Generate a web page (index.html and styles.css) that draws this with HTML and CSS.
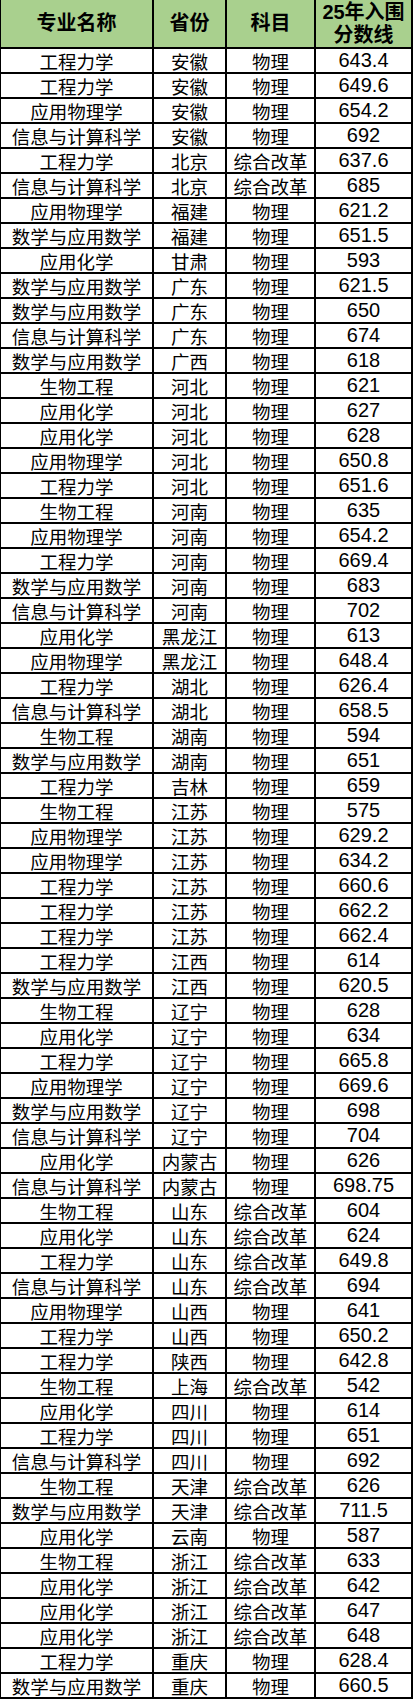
FILE: index.html
```html
<!DOCTYPE html>
<html lang="zh-CN">
<head>
<meta charset="utf-8">
<title>25年入围分数线</title>
<link rel="stylesheet" href="styles.css">
</head>
<body>
<div class="sheet" id="sheet">
  <div class="hd c1">专业名称</div>
  <div class="hd">省份</div>
  <div class="hd">科目</div>
  <div class="hd">25年入围<br>分数线</div>
</div>
<script src="app.js"></script>
</body>
</html>
```

FILE: styles.css
```css
html, body {
  margin: 0;
  padding: 0;
  background: #fff;
}
body {
  width: 413px;
  font-family: "Liberation Sans", "Noto Sans CJK SC", sans-serif;
  color: #000;
}
.sheet {
  display: grid;
  grid-template-columns: 154px 73px 89px 97px;
  grid-template-rows: 49px;
  grid-auto-rows: 25px;
}
.hd {
  background: #A9D08E;
  font-weight: bold;
  font-size: 20px;
  line-height: 23px;
  text-align: center;
  box-sizing: border-box;
  border-right: 2px solid #000;
  border-bottom: 2px solid #000;
  display: flex;
  align-items: center;
  justify-content: center;
}
.cell {
  box-sizing: border-box;
  border-right: 2px solid #000;
  border-bottom: 2px solid #000;
  display: flex;
  align-items: center;
  justify-content: center;
  font-size: 18.5px;
  white-space: nowrap;
}
.c1 {
  border-left: 1px solid #000;
}
.num {
  font-size: 20px;
}
```

FILE: app.js
```js
const data = [
["工程力学","安徽","物理","643.4"],
["工程力学","安徽","物理","649.6"],
["应用物理学","安徽","物理","654.2"],
["信息与计算科学","安徽","物理","692"],
["工程力学","北京","综合改革","637.6"],
["信息与计算科学","北京","综合改革","685"],
["应用物理学","福建","物理","621.2"],
["数学与应用数学","福建","物理","651.5"],
["应用化学","甘肃","物理","593"],
["数学与应用数学","广东","物理","621.5"],
["数学与应用数学","广东","物理","650"],
["信息与计算科学","广东","物理","674"],
["数学与应用数学","广西","物理","618"],
["生物工程","河北","物理","621"],
["应用化学","河北","物理","627"],
["应用化学","河北","物理","628"],
["应用物理学","河北","物理","650.8"],
["工程力学","河北","物理","651.6"],
["生物工程","河南","物理","635"],
["应用物理学","河南","物理","654.2"],
["工程力学","河南","物理","669.4"],
["数学与应用数学","河南","物理","683"],
["信息与计算科学","河南","物理","702"],
["应用化学","黑龙江","物理","613"],
["应用物理学","黑龙江","物理","648.4"],
["工程力学","湖北","物理","626.4"],
["信息与计算科学","湖北","物理","658.5"],
["生物工程","湖南","物理","594"],
["数学与应用数学","湖南","物理","651"],
["工程力学","吉林","物理","659"],
["生物工程","江苏","物理","575"],
["应用物理学","江苏","物理","629.2"],
["应用物理学","江苏","物理","634.2"],
["工程力学","江苏","物理","660.6"],
["工程力学","江苏","物理","662.2"],
["工程力学","江苏","物理","662.4"],
["工程力学","江西","物理","614"],
["数学与应用数学","江西","物理","620.5"],
["生物工程","辽宁","物理","628"],
["应用化学","辽宁","物理","634"],
["工程力学","辽宁","物理","665.8"],
["应用物理学","辽宁","物理","669.6"],
["数学与应用数学","辽宁","物理","698"],
["信息与计算科学","辽宁","物理","704"],
["应用化学","内蒙古","物理","626"],
["信息与计算科学","内蒙古","物理","698.75"],
["生物工程","山东","综合改革","604"],
["应用化学","山东","综合改革","624"],
["工程力学","山东","综合改革","649.8"],
["信息与计算科学","山东","综合改革","694"],
["应用物理学","山西","物理","641"],
["工程力学","山西","物理","650.2"],
["工程力学","陕西","物理","642.8"],
["生物工程","上海","综合改革","542"],
["应用化学","四川","物理","614"],
["工程力学","四川","物理","651"],
["信息与计算科学","四川","物理","692"],
["生物工程","天津","综合改革","626"],
["数学与应用数学","天津","综合改革","711.5"],
["应用化学","云南","物理","587"],
["生物工程","浙江","综合改革","633"],
["应用化学","浙江","综合改革","642"],
["应用化学","浙江","综合改革","647"],
["应用化学","浙江","综合改革","648"],
["工程力学","重庆","物理","628.4"],
["数学与应用数学","重庆","物理","660.5"]
];
const sheet = document.getElementById("sheet");
data.forEach(row => {
  row.forEach((v, i) => {
    const d = document.createElement("div");
    d.className = "cell" + (i === 0 ? " c1" : "") + (i === 3 ? " num" : "");
    d.textContent = v;
    sheet.appendChild(d);
  });
});
```
